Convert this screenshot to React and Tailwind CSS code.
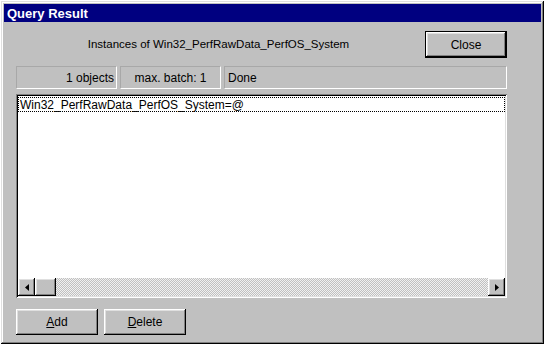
import React from "react";

const raised =
  "shadow-[inset_-1px_-1px_#000,inset_1px_1px_#fff,inset_-2px_-2px_#808080,inset_2px_2px_#dfdfdf]";

function Button({ children, isDefault, className = "" }) {
  if (isDefault) {
    return (
      <div className={`border border-black ${className}`}>
        <div className={`h-full w-full bg-[#c0c0c0] ${raised} flex items-center justify-center text-[12px] text-black`}>
          {children}
        </div>
      </div>
    );
  }
  return (
    <div className={`bg-[#c0c0c0] ${raised} flex items-center justify-center text-[12px] text-black ${className}`}>
      {children}
    </div>
  );
}

function Field({ children, className = "" }) {
  return (
    <div
      className={`h-[23px] flex items-center border border-t-[#a8a8a8] border-l-[#a8a8a8] border-b-white border-r-white text-[12px] text-black ${className}`}
    >
      {children}
    </div>
  );
}

function Arrow({ dir }) {
  return (
    <svg width="4" height="7" viewBox="0 0 4 7">
      {dir === "left" ? (
        <path d="M4 0 L0 3.5 L4 7 Z" fill="#000" />
      ) : (
        <path d="M0 0 L4 3.5 L0 7 Z" fill="#000" />
      )}
    </svg>
  );
}

export default function App() {
  return (
    <div className="w-[545px] h-[345px] bg-white p-[1px] font-['Liberation_Sans',Arial,sans-serif]">
      {/* window frame */}
      <div className="w-[543px] h-[343px] bg-[#c0c0c0] p-[3px] shadow-[inset_-1px_-1px_#000,inset_1px_1px_#dfdfdf,inset_-2px_-2px_#808080,inset_2px_2px_#fff]">
        {/* title bar */}
        <div className="h-[18px] bg-[#000080] flex items-center pl-[3px]">
          <span className="text-white font-bold text-[13px] leading-none">Query Result</span>
        </div>

        <div className="pl-[12px] w-[503px]">
          {/* header */}
          <div className="mt-[9px] flex items-center">
            <div className="flex-1 text-center text-[11.5px] text-black pr-[4px]">
              Instances of Win32_PerfRawData_PerfOS_System
            </div>
            <Button isDefault className="w-[82px] h-[27px]">Close</Button>
          </div>

          {/* status row */}
          <div className="mt-[8px] flex gap-[3px]">
            <Field className="w-[101px] justify-end pr-[2px]">1 objects</Field>
            <Field className="w-[101px] justify-center">max. batch: 1</Field>
            <Field className="flex-1 pl-[3px]">Done</Field>
          </div>

          {/* list */}
          <div className="mt-[5px] h-[204px] bg-white flex flex-col p-[2px] shadow-[inset_1px_1px_#808080,inset_-1px_-1px_#fff,inset_2px_2px_#000,inset_-2px_-2px_#dfdfdf]">
            <div className="flex-1">
              <div className="mt-[1px] h-[15px] flex items-center border border-dotted border-black pl-[1px] text-[12px] text-black">
                Win32_PerfRawData_PerfOS_System=@
              </div>
            </div>
            {/* horizontal scrollbar */}
            <div className="h-[18px] flex bg-[repeating-conic-gradient(#c0c0c0_0_25%,#f0f0f0_0_50%)] bg-[length:2px_2px]">
              <div className={`w-[17px] h-full bg-[#c0c0c0] ${raised} flex items-center justify-center`}>
                <Arrow dir="left" />
              </div>
              <div className={`w-[21px] h-full bg-[#c0c0c0] ${raised}`} />
              <div className="flex-1" />
              <div className={`w-[17px] h-full bg-[#c0c0c0] ${raised} flex items-center justify-center`}>
                <Arrow dir="right" />
              </div>
            </div>
          </div>

          {/* bottom buttons */}
          <div className="mt-[11px] flex gap-[6px]">
            <Button className="w-[82px] h-[26px]">
              <span>
                <span className="underline">A</span>dd
              </span>
            </Button>
            <Button className="w-[82px] h-[26px]">
              <span>
                <span className="underline">D</span>elete
              </span>
            </Button>
          </div>
        </div>
      </div>
    </div>
  );
}
